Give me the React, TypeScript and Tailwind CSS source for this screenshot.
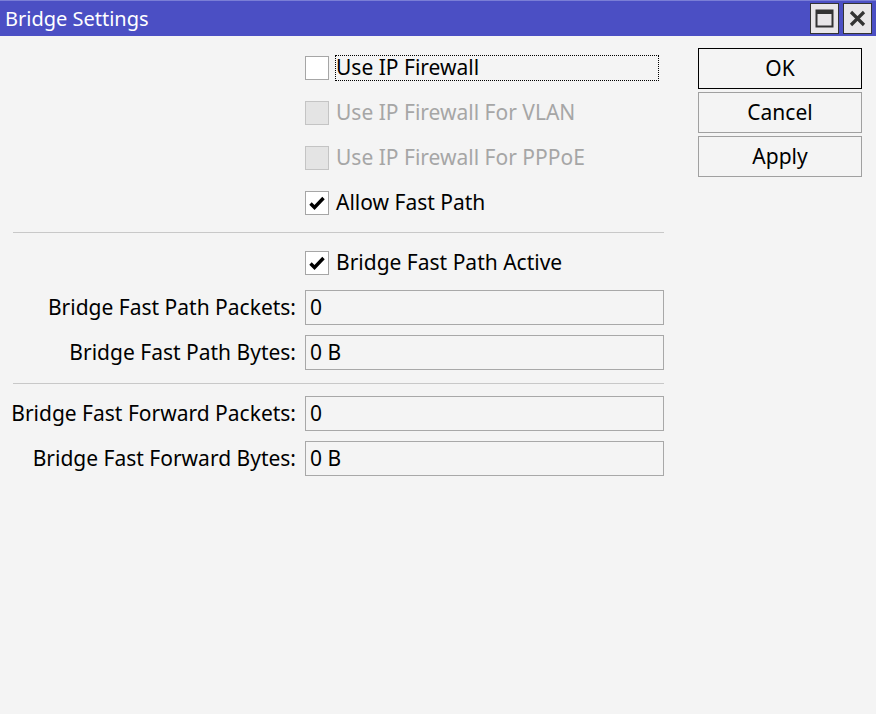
import React from "react";

const font = { fontFamily: '"Noto Sans", "DejaVu Sans", sans-serif' };

const Check = ({ checked, disabled }: { checked?: boolean; disabled?: boolean }) => (
  <span
    className={`flex h-[24px] w-[24px] shrink-0 items-center justify-center border ${
      disabled ? "border-[#c4c4c4] bg-[#e4e4e4]" : "border-[#a6a6a6] bg-white"
    }`}
  >
    {checked && (
      <svg width="16" height="14" viewBox="0 0 16 14">
        <path d="M1.5 7.5 L5.5 11.5 L14.5 2" stroke="#000" strokeWidth="3.4" fill="none" />
      </svg>
    )}
  </span>
);

const CheckRow = ({
  label,
  checked,
  disabled,
  focused,
}: {
  label: string;
  checked?: boolean;
  disabled?: boolean;
  focused?: boolean;
}) => (
  <div className="flex h-[45px] items-center pl-[305px]">
    <Check checked={checked} disabled={disabled} />
    <span
      className={`ml-[6px] flex h-[26px] items-center ${
        focused ? "w-[324px] border border-dotted border-black" : "border border-transparent"
      } ${disabled ? "text-[#a6a6a6]" : "text-black"}`}
    >
      {label}
    </span>
  </div>
);

const FieldRow = ({ label, value }: { label: string; value: string }) => (
  <div className="flex h-[45px] items-center">
    <span className="w-[296px] text-right text-black">{label}</span>
    <div className="ml-[9px] flex h-[35px] w-[359px] items-center border border-[#a8a8a8] px-[4px] text-black">
      {value}
    </div>
  </div>
);

const Btn = ({ label, primary }: { label: string; primary?: boolean }) => (
  <div
    className={`flex h-[41px] w-[164px] items-center justify-center border bg-[#f4f4f4] text-black ${
      primary ? "border-black" : "border-[#a0a0a0]"
    }`}
  >
    {label}
  </div>
);

export default function App() {
  return (
    <div className="flex h-[714px] w-[876px] flex-col bg-[#f4f4f4] text-[21px]" style={font}>
      <div className="flex h-[36px] items-center justify-between border-t border-[#7a7ed6] bg-[#4b4fc4] pl-[5px] pr-[4px]">
        <span className="text-[20px] text-white">Bridge Settings</span>
        <div className="flex gap-[4px]">
          <div className="flex h-[31px] w-[29px] items-center justify-center border border-[#333] bg-[#e8e6e8]">
            <svg width="19" height="19" viewBox="0 0 19 19">
              <rect x="1.5" y="1.5" width="16" height="16" fill="none" stroke="#333" strokeWidth="2" />
              <rect x="1" y="1" width="17" height="4" fill="#333" />
            </svg>
          </div>
          <div className="flex h-[31px] w-[29px] items-center justify-center border border-[#333] bg-[#e8e6e8]">
            <svg width="17" height="17" viewBox="0 0 17 17">
              <path d="M2 2 L15 15 M15 2 L2 15" stroke="#333" strokeWidth="3.2" />
            </svg>
          </div>
        </div>
      </div>
      <div className="flex">
        <div className="w-[698px] pt-[9px]">
          <CheckRow label="Use IP Firewall" focused />
          <CheckRow label="Use IP Firewall For VLAN" disabled />
          <CheckRow label="Use IP Firewall For PPPoE" disabled />
          <CheckRow label="Allow Fast Path" checked />
          <div className="mb-[7px] ml-[13px] mt-[7px] h-px w-[651px] bg-[#c8c8c8]" />
          <CheckRow label="Bridge Fast Path Active" checked />
          <FieldRow label="Bridge Fast Path Packets:" value="0" />
          <FieldRow label="Bridge Fast Path Bytes:" value="0 B" />
          <div className="mb-[7px] ml-[13px] mt-[8px] h-px w-[651px] bg-[#c8c8c8]" />
          <FieldRow label="Bridge Fast Forward Packets:" value="0" />
          <FieldRow label="Bridge Fast Forward Bytes:" value="0 B" />
        </div>
        <div className="flex flex-col gap-[3px] pt-[12px]">
          <Btn label="OK" primary />
          <Btn label="Cancel" />
          <Btn label="Apply" />
        </div>
      </div>
    </div>
  );
}
